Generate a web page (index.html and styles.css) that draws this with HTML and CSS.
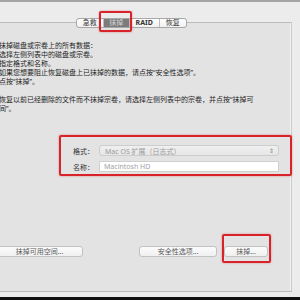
FILE: index.html
```html
<!DOCTYPE html>
<html lang="zh-CN">
  <head>
    <meta charset="UTF-8" />
    <meta name="viewport" content="width=device-width, initial-scale=1.0" />
    <title>磁盘工具 - 抹掉</title>
    <link rel="stylesheet" href="styles.css">
  </head>
  <body>
    <div class="window">
      <div class="top-line"></div>
      <div class="panel">
        <div class="tabs">
          <span class="tab">急救</span>
          <span class="tab selected marked">抹掉</span>
          <span class="tab tab-raid">RAID</span>
          <span class="tab">恢复</span>
        </div>

        <div class="info">
          <div>抹掉磁盘或宗卷上的所有数据：</div>
          <div>选择左侧列表中的磁盘或宗卷。</div>
          <div>指定格式和名称。</div>
          <div>如果您想要阻止恢复磁盘上已抹掉的数据，请点按“安全性选项”。</div>
          <div>点按“抹掉”。</div>
          <div class="blank"></div>
          <div>恢复以前已经删除的文件而不抹掉宗卷，请选择左侧列表中的宗卷，并点按“抹掉可</div>
          <div>间”。</div>
        </div>

        <div class="form-box">
          <div class="form-row">
            <label>格式：</label>
            <div class="popup">
              <span>Mac OS 扩展（日志式）</span>
              <span class="arrows">⇕</span>
            </div>
          </div>
          <div class="form-row">
            <label>名称：</label>
            <div class="field">Macintosh HD</div>
          </div>
        </div>

        <div class="buttons">
          <button class="btn btn-free">抹掉可用空间...</button>
          <button class="btn btn-security">安全性选项...</button>
          <button class="btn btn-erase marked">抹掉...</button>
        </div>
      </div>
    </div>
    <div class="bottom-bar"></div>
  </body>
</html>
```

FILE: styles.css
```css
body {
  margin: 0;
  width: 300px;
  height: 300px;
  overflow: hidden;
  background-color: #ececec;
  font-family: "Noto Sans", "Noto Sans CJK SC", sans-serif;
  color: #222;
}

.window {
  height: 297px;
  display: flex;
  flex-direction: column;
}

.top-line {
  height: 2px;
  background-color: #a4a4a4;
  margin-bottom: 20px;
}

.panel {
  margin-left: -1px;
  width: 293px;
  height: 270px;
  box-sizing: border-box;
  background-color: #e3e3e3;
  border: 1px solid #bcbcbc;
  border-right-color: #cbcbcb;
  box-shadow: inset -1px 0 0 #f2f2f2;
}

.tabs {
  display: flex;
  margin-top: -5px;
  margin-left: 76px;
  width: 111px;
  height: 10px;
  box-sizing: border-box;
  border: 1px solid #a8a8a8;
  border-radius: 3px;
  background: linear-gradient(#ffffff, #f1f1f1);
}

.tab {
  width: 27px;
  font-size: 7px;
  line-height: 8px;
  text-align: center;
  color: #333;
  border-right: 1px solid #bdbdbd;
  box-sizing: border-box;
  position: relative;
}

.tab:last-child {
  border-right: none;
}

.tab-raid {
  width: 30px;
  font-weight: bold;
}

.tab.selected {
  background-color: #7b7b7b;
  color: #d4d4d4;
}

.marked::after {
  content: "";
  position: absolute;
  border: 2px solid #d8232a;
  border-radius: 2px;
  box-shadow: 0 0 2px rgba(216, 35, 42, 0.5);
}

.tab.marked::after {
  left: -5px;
  right: -3px;
  top: -8px;
  bottom: -5px;
}

.info {
  margin-top: 13px;
  margin-left: -1px;
  font-size: 7px;
  line-height: 9px;
  white-space: nowrap;
  color: #1e1e1e;
}

.blank {
  height: 9px;
}

.form-box {
  margin-top: 22px;
  margin-left: 59px;
  width: 233px;
  box-sizing: border-box;
  padding: 8px 10px 2px 12px;
  border: 2px solid #d8232a;
  border-radius: 2px;
  box-shadow: 0 0 2px rgba(216, 35, 42, 0.5);
  display: flex;
  flex-direction: column;
  gap: 5px;
}

.form-row {
  display: flex;
  align-items: center;
  gap: 6px;
}

.form-row label {
  width: 20px;
  font-size: 7px;
  text-align: right;
  color: #333;
  white-space: nowrap;
}

.popup {
  width: 180px;
  height: 11px;
  box-sizing: border-box;
  display: flex;
  justify-content: space-between;
  align-items: center;
  padding: 0 4px 0 5px;
  border: 1px solid #cdcdcd;
  border-radius: 3px;
  background: linear-gradient(#f0f0f0, #e6e6e6);
  font-size: 7px;
  color: #9b9b9b;
}

.arrows {
  font-size: 6px;
  color: #8a8a8a;
}

.field {
  width: 180px;
  height: 11px;
  box-sizing: border-box;
  padding-left: 4px;
  border: 1px solid #d0d0d0;
  background-color: #ffffff;
  font-size: 7px;
  line-height: 9px;
  color: #a2a2a2;
}

.buttons {
  display: flex;
  margin-top: 70px;
  margin-left: -4px;
}

.btn {
  position: relative;
  height: 11px;
  padding: 0;
  border: 1px solid #c2c2c2;
  border-radius: 3px;
  background: linear-gradient(#fbfbfb, #f0f0f0);
  font-family: "Noto Sans", "Noto Sans CJK SC", sans-serif;
  font-size: 7px;
  line-height: 9px;
  color: #5a5a5a;
}

.btn-free {
  width: 87px;
}

.btn-security {
  width: 78px;
  margin-left: 56px;
}

.btn-erase {
  width: 44px;
  margin-left: 7px;
}

.btn.marked::after {
  left: -3px;
  right: -4px;
  top: -13px;
  bottom: -7px;
}

.bottom-bar {
  height: 3px;
  background-color: #111;
}
```
